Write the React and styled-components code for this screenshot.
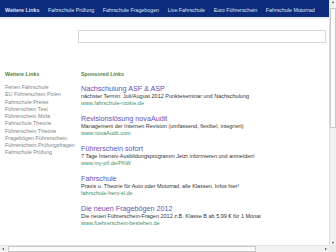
import React from "react";
import styled, { createGlobalStyle } from "styled-components";

const Global = createGlobalStyle`
  html, body { margin: 0; padding: 0; background: #fff; overflow: hidden; }
  body { font-family: "Liberation Sans", Arial, sans-serif; }
`;

const Frame = styled.div`
  width: 336px;
  height: 252px;
  display: grid;
  grid-template-columns: 329px 7px;
  grid-template-rows: 245px 7px;
  background: #fff;
`;

const Page = styled.div`
  overflow: hidden;
  display: flex;
  flex-direction: column;
`;

const Nav = styled.nav`
  height: 17px;
  background: #0d2b7c;
  display: flex;
  align-items: center;
  padding-left: 5px;
  gap: 8.6px;
  flex-shrink: 0;
`;

const NavItem = styled.a`
  position: relative;
  font-size: 5.3px;
  color: #dfe4f2;
  white-space: nowrap;
  text-decoration: none;
  font-weight: ${(p) => (p.$active ? "bold" : "normal")};
  padding-top: 2px;
  &::before {
    content: "";
    display: ${(p) => (p.$active ? "block" : "none")};
    position: absolute;
    left: -5px;
    right: -3px;
    top: -8px;
    height: 2px;
    background: #2e6f7e;
  }
`;

const Strip = styled.div`
  height: 2px;
  background: #e7ecf8;
  flex-shrink: 0;
`;

const SearchRow = styled.div`
  padding: 11px 3px 0 78px;
  flex-shrink: 0;
`;

const SearchInput = styled.div`
  height: 11px;
  border: 1px solid #d8d8d8;
  background: #fff;
`;

const Columns = styled.div`
  display: grid;
  grid-template-columns: 76px 1fr;
  padding: 27px 0 0 5px;
`;

const Heading = styled.div`
  font-size: 5.3px;
  font-weight: bold;
  color: #55803f;
  height: 8px;
  line-height: 8px;
  margin-bottom: 6px;
`;

const LinkList = styled.div`
  display: flex;
  flex-direction: column;
`;

const SideLink = styled.a`
  font-size: 5.4px;
  line-height: 7.25px;
  color: #858585;
  text-decoration: none;
  white-space: nowrap;
`;

const Ad = styled.div`
  display: flex;
  flex-direction: column;
  margin-bottom: 7.5px;
`;

const AdTitle = styled.a`
  font-size: 7.2px;
  line-height: 8px;
  color: #6252b6;
  text-decoration: none;
  white-space: nowrap;
  padding-top: 0.5px;
`;

const AdText = styled.div`
  font-size: 5.5px;
  line-height: 7px;
  color: #333;
  white-space: nowrap;
`;

const AdUrl = styled.a`
  font-size: 5.5px;
  line-height: 7px;
  color: #43906a;
  text-decoration: none;
  white-space: nowrap;
`;

const VScroll = styled.div`
  background: #f1f1f1;
  border-left: 1px solid #e2e2e2;
  display: flex;
  flex-direction: column;
  align-items: center;
  justify-content: space-between;
  position: relative;
`;

const HScroll = styled.div`
  background: #f1f1f1;
  border-top: 1px solid #e2e2e2;
  display: flex;
  align-items: center;
  justify-content: space-between;
  position: relative;
`;

const Thumb = styled.div`
  position: absolute;
  background: #fbfbfb;
  border: 1px solid #c9c9c9;
  box-sizing: border-box;
`;

const Arrow = styled.span`
  width: 0;
  height: 0;
  border-style: solid;
  margin: 1px 2px;
  ${(p) =>
    p.$dir === "up"
      ? "border-width: 0 1.5px 2px 1.5px; border-color: transparent transparent #444 transparent;"
      : p.$dir === "down"
      ? "border-width: 2px 1.5px 0 1.5px; border-color: #444 transparent transparent transparent;"
      : p.$dir === "left"
      ? "border-width: 1.5px 2px 1.5px 0; border-color: transparent #444 transparent transparent;"
      : "border-width: 1.5px 0 1.5px 2px; border-color: transparent transparent transparent #444;"}
`;

const Corner = styled.div`
  background: #ececec;
`;

const navItems = [
  "Weitere Links",
  "Fahrschule Prüfung",
  "Fahrschule Fragebogen",
  "Live Fahrschule",
  "Euro Führerschein",
  "Fahrschule Motorrad",
];

const sideLinks = [
  "Ferien Fahrschule",
  "EU Führerschein Polen",
  "Fahrschule Preise",
  "Führerschein Test",
  "Führerschein Mofa",
  "Fahrschule Theorie",
  "Führerschein Theorie",
  "Fragebögen Führerschein",
  "Führerschein Prüfungsfragen",
  "Fahrschule Prüfung",
];

const ads = [
  {
    title: "Nachschulung ASF & ASP",
    text: "nächster Termin: Juli/August 2012 Punkteseminar und Nachschulung",
    url: "www.fahrschule-rookie.de",
  },
  {
    title: "Revisionslösung novaAudit",
    text: "Management der Internen Revision (umfassend, flexibel, integriert)",
    url: "www.novaAudit.com",
  },
  {
    title: "Führerschein sofort",
    text: "7 Tage Intensiv-Ausbildungsprogramm Jetzt informieren und anmelden!",
    url: "www.my-pif.de/PKW",
  },
  {
    title: "Fahrschule",
    text: "Praxis u. Theorie für Auto oder Motorrad, alle Klassen. Infos hier!",
    url: "fahrschule-hero-sl.de",
  },
  {
    title: "Die neuen Fragebögen 2012",
    text: "Die neuen Führerschein-Fragen 2012 z.B. Klasse B ab 5,99 € für 1 Monat",
    url: "www.fuehrerschein-bestehen.de",
  },
];

export default function App() {
  return (
    <>
      <Global />
      <Frame>
        <Page>
          <Nav>
            {navItems.map((n, i) => (
              <NavItem key={n} $active={i === 0}>
                {n}
              </NavItem>
            ))}
          </Nav>
          <Strip />
          <SearchRow>
            <SearchInput />
          </SearchRow>
          <Columns>
            <div>
              <Heading>Weitere Links</Heading>
              <LinkList>
                {sideLinks.map((l) => (
                  <SideLink key={l}>{l}</SideLink>
                ))}
              </LinkList>
            </div>
            <div>
              <Heading>Sponsored Links</Heading>
              {ads.map((a) => (
                <Ad key={a.title}>
                  <AdTitle>{a.title}</AdTitle>
                  <AdText>{a.text}</AdText>
                  <AdUrl>{a.url}</AdUrl>
                </Ad>
              ))}
            </div>
          </Columns>
        </Page>
        <VScroll>
          <Arrow $dir="up" />
          <Thumb style={{ left: 0, right: 0, top: 8, height: 120 }} />
          <Arrow $dir="down" />
        </VScroll>
        <HScroll>
          <Arrow $dir="left" />
          <Thumb style={{ top: 0, bottom: 0, left: 8, width: 248 }} />
          <Arrow $dir="right" />
        </HScroll>
        <Corner />
      </Frame>
    </>
  );
}
